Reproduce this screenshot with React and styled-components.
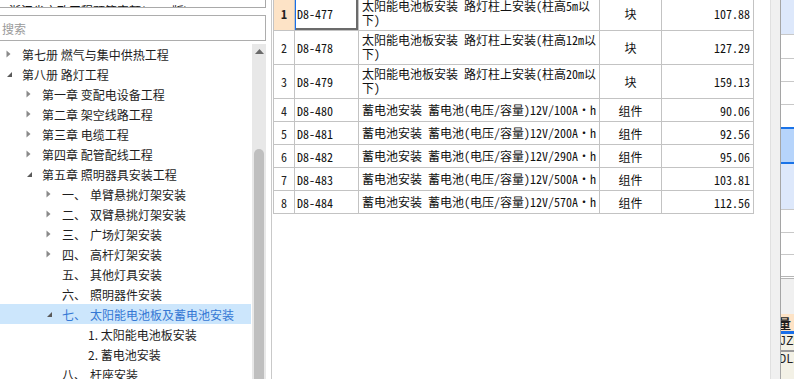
import React from 'react'
import styled, { createGlobalStyle } from 'styled-components'

const GlobalStyle = createGlobalStyle`
  html, body {
    margin: 0;
    padding: 0;
    background: #ffffff;
  }
  body {
    font-family: "Noto Sans CJK SC", "Liberation Sans", sans-serif;
    font-size: 12px;
    color: #1e1e1e;
  }
`

const treeItems = [
  { level: 0, label: '第七册 燃气与集中供热工程', arrow: 'closed' },
  { level: 0, label: '第八册 路灯工程', arrow: 'open' },
  { level: 1, label: '第一章 变配电设备工程', arrow: 'closed' },
  { level: 1, label: '第二章 架空线路工程', arrow: 'closed' },
  { level: 1, label: '第三章 电缆工程', arrow: 'closed' },
  { level: 1, label: '第四章 配管配线工程', arrow: 'closed' },
  { level: 1, label: '第五章 照明器具安装工程', arrow: 'open' },
  { level: 2, num: '一、', label: '单臂悬挑灯架安装', arrow: 'closed' },
  { level: 2, num: '二、', label: '双臂悬挑灯架安装', arrow: 'closed' },
  { level: 2, num: '三、', label: '广场灯架安装', arrow: 'closed' },
  { level: 2, num: '四、', label: '高杆灯架安装', arrow: 'closed' },
  { level: 2, num: '五、', label: '其他灯具安装' },
  { level: 2, num: '六、', label: '照明器件安装' },
  { level: 2, num: '七、', label: '太阳能电池板及蓄电池安装', arrow: 'open', selected: true },
  { level: 3, label: '1. 太阳能电池板安装' },
  { level: 3, label: '2. 蓄电池安装' },
  { level: 2, num: '八、', label: '杆座安装' },
]

const rows = [
  { no: 1, code: 'D8-477', name: '太阳能电池板安装 路灯柱上安装(柱高5m以下)', unit: '块', price: '107.88', tall: true, active: true },
  { no: 2, code: 'D8-478', name: '太阳能电池板安装 路灯柱上安装(柱高12m以下)', unit: '块', price: '127.29', tall: true },
  { no: 3, code: 'D8-479', name: '太阳能电池板安装 路灯柱上安装(柱高20m以下)', unit: '块', price: '159.13', tall: true },
  { no: 4, code: 'D8-480', name: '蓄电池安装 蓄电池(电压/容量)12V/100A・h', unit: '组件', price: '90.06' },
  { no: 5, code: 'D8-481', name: '蓄电池安装 蓄电池(电压/容量)12V/200A・h', unit: '组件', price: '92.56' },
  { no: 6, code: 'D8-482', name: '蓄电池安装 蓄电池(电压/容量)12V/290A・h', unit: '组件', price: '95.06' },
  { no: 7, code: 'D8-483', name: '蓄电池安装 蓄电池(电压/容量)12V/500A・h', unit: '组件', price: '103.81' },
  { no: 8, code: 'D8-484', name: '蓄电池安装 蓄电池(电压/容量)12V/570A・h', unit: '组件', price: '112.56' },
]

function Arrow({ type }) {
  if (type === 'open') {
    return (
      <svg width="7" height="7" viewBox="0 0 7 7">
        <path d="M6 1 L6 6 L1 6 Z" fill="#5a5a5a" />
      </svg>
    )
  }
  return (
    <svg width="5" height="8" viewBox="0 0 5 8">
      <path d="M0.5 0.5 L4.5 4 L0.5 7.5 Z" fill="#8a8a8a" />
    </svg>
  )
}

function App() {
  return (
    <Page>
      <GlobalStyle />

      <LeftPanel>
        <TopBox>
          <TopText>浙江省市政工程预算定额(2018版)</TopText>
        </TopBox>
        <SearchBox>搜索</SearchBox>

        <TreeArea>
          <TreeList>
            {treeItems.map((item, i) => (
              <TreeRow key={i} $level={item.level} $selected={item.selected}>
                <ArrowBox>{item.arrow && <Arrow type={item.arrow} />}</ArrowBox>
                {item.num && <NumLabel>{item.num}</NumLabel>}
                <span>{item.label}</span>
              </TreeRow>
            ))}
          </TreeList>
          <ScrollBar>
            <ScrollArrow>
              <svg width="9" height="5" viewBox="0 0 9 5">
                <path d="M0 5 L4.5 0 L9 5 Z" fill="#6b6b6b" />
              </svg>
            </ScrollArrow>
            <ScrollThumb />
          </ScrollBar>
        </TreeArea>
      </LeftPanel>

      <MainPanel>
        <Table>
          <colgroup>
            <col style={{ width: 21 }} />
            <col style={{ width: 64 }} />
            <col style={{ width: 241 }} />
            <col style={{ width: 62 }} />
            <col style={{ width: 92 }} />
          </colgroup>
          <tbody>
            {rows.map((r) => (
              <Row key={r.no} $tall={r.tall}>
                <NoCell $active={r.active}>{r.no}</NoCell>
                <CodeCell $active={r.active}>{r.code}</CodeCell>
                <NameCell $tall={r.tall}>{r.name}</NameCell>
                <UnitCell>{r.unit}</UnitCell>
                <PriceCell>{r.price}</PriceCell>
              </Row>
            ))}
          </tbody>
        </Table>
      </MainPanel>

      <Splitter />

      <RightPanel>
        <RBlock $h={35} $bg="#dde8fb" />
        <RBlock $h={24} />
        <RBlock $h={23} />
        <RBlock $h={23} />
        <RBlock $h={22} $noLine />
        <RSelected />
        <RBlock $h={46} $bg="#dde8fb" />
        <RBlock $h={23} />
        <RBlock $h={22} />
        <RBlock $h={24} $double />
        <RGray />
        <RHeader>数量</RHeader>
        <RCode>JZM</RCode>
        <RCode $last>DLZ</RCode>
      </RightPanel>
    </Page>
  )
}

export default App


const Page = styled.div`
  display: flex;
  width: 794px;
  height: 379px;
  overflow: hidden;
  background: #ffffff;
`

const LeftPanel = styled.div`
  width: 266px;
  flex-shrink: 0;
  display: flex;
  flex-direction: column;
  margin-right: 5px;
`

const TopBox = styled.div`
  height: 7px;
  border-bottom: 1px solid #a9a9a9;
  border-right: 1px solid #a9a9a9;
  overflow: hidden;
  display: flex;
  align-items: flex-end;
`

const TopText = styled.div`
  padding-left: 9px;
  margin-bottom: -12px;
  line-height: 16px;
  white-space: nowrap;
  color: #111;
`

const SearchBox = styled.div`
  margin-top: 7px;
  height: 24px;
  border: 1px solid #adadad;
  border-left: none;
  padding-left: 2px;
  display: flex;
  align-items: center;
  color: #9a9a9a;
  font-size: 12px;
`

const TreeArea = styled.div`
  flex: 1;
  display: flex;
  margin-top: 2px;
  min-height: 0;
`

const TreeList = styled.div`
  flex: 1;
  padding-top: 1px;
`

const TreeRow = styled.div`
  height: 20px;
  display: flex;
  align-items: center;
  white-space: nowrap;
  padding-left: ${(p) => (p.$level === 3 ? 69 : 3 + p.$level * 20)}px;
  background: ${(p) => (p.$selected ? '#cce6fc' : 'transparent')};
  color: ${(p) => (p.$selected ? '#3578d4' : '#1e1e1e')};
  margin-right: 1px;
`

const ArrowBox = styled.span`
  width: 19px;
  display: flex;
  align-items: center;
  padding-left: 3px;
  box-sizing: border-box;
`

const NumLabel = styled.span`
  width: 28px;
`

const ScrollBar = styled.div`
  width: 14px;
  background: #e8e8e8;
  display: flex;
  flex-direction: column;
  align-items: center;
  margin-top: 1px;
`

const ScrollArrow = styled.div`
  height: 14px;
  display: flex;
  align-items: center;
  justify-content: center;
`

const ScrollThumb = styled.div`
  margin-top: 91px;
  width: 10px;
  flex: 1;
  background: #bfbfbf;
  border-radius: 5px 5px 0 0;
`

const MainPanel = styled.div`
  width: 498px;
  flex-shrink: 0;
  border-left: 1px solid #c9c9c9;
`

const Table = styled.table`
  margin-top: -4px;
  margin-left: 1px;
  border-collapse: collapse;
  table-layout: fixed;
  width: 480px;
  font-family: "Noto Sans Mono CJK SC", "Noto Sans CJK SC", "Liberation Mono", monospace;
  font-size: 12px;
  color: #111;

  td {
    border: 1px solid #c3c3c3;
    padding: 0;
    overflow: hidden;
  }
`

const Row = styled.tr`
  height: ${(p) => (p.$tall ? 34 : 23)}px;
`

const NoCell = styled.td`
  text-align: center;
  font-weight: ${(p) => (p.$active ? 700 : 400)};
  background: ${(p) => (p.$active ? '#fde3c6' : '#ffffff')};
  color: #222;
`

const CodeCell = styled.td`
  padding-left: 2px !important;
  ${(p) =>
    p.$active &&
    `
    box-shadow: inset 1px 0 0 #1a6fe8, inset -2px -2px 0 #6b6b6b;
  `}
`

const NameCell = styled.td`
  vertical-align: ${(p) => (p.$tall ? 'top' : 'middle')};
  padding: ${(p) => (p.$tall ? '2px 2px 0 3px' : '0 0 0 3px')} !important;
  line-height: 14px;
  white-space: ${(p) => (p.$tall ? 'normal' : 'nowrap')};
`

const UnitCell = styled.td`
  text-align: center;
`

const PriceCell = styled.td`
  text-align: right;
  padding-right: 3px !important;
`

const Splitter = styled.div`
  width: 9px;
  flex-shrink: 0;
  background: #f0f0f0;
  border-left: 1px solid #e0e0e0;
  border-right: 1px solid #a5a5a5;
`

const RightPanel = styled.div`
  flex: 1;
  display: flex;
  flex-direction: column;
  overflow: hidden;
`

const RBlock = styled.div`
  height: ${(p) => p.$h}px;
  flex-shrink: 0;
  background: ${(p) => p.$bg || '#ffffff'};
  box-sizing: border-box;
  border-bottom: ${(p) => (p.$noLine ? 'none' : p.$double ? '3px double #b5b5b5' : '1px solid #c8c8c8')};
`

const RSelected = styled.div`
  height: 33px;
  flex-shrink: 0;
  background: #b6d4fb;
  border-top: 2px solid #1a73e8;
  border-bottom: 2px solid #1a73e8;
`

const RGray = styled.div`
  height: 35px;
  flex-shrink: 0;
  background: #f0f0f0;
`

const RHeader = styled.div`
  height: 17px;
  flex-shrink: 0;
  background: #fde3c6;
  border-bottom: 3px solid #1a6fe8;
  font-weight: 700;
  font-size: 13px;
  line-height: 17px;
  white-space: nowrap;
  text-indent: -16px;
  overflow: hidden;
`

const RCode = styled.div`
  height: 16px;
  flex-shrink: 0;
  background: #f3f1e6;
  font-family: "Liberation Mono", monospace;
  font-size: 12px;
  line-height: 16px;
  white-space: nowrap;
  text-indent: -2px;
  overflow: hidden;
  border-bottom: ${(p) => (p.$last ? 'none' : '2px solid #9a9a9a')};
  flex: ${(p) => (p.$last ? 1 : 'none')};
`
